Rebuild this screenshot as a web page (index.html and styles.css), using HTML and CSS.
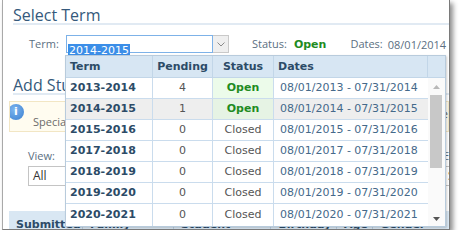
FILE: index.html
```html
<!DOCTYPE html>
<html lang="en">
<head>
  <meta charset="UTF-8" />
  <title>Select Term</title>
  <link rel="stylesheet" href="styles.css">
</head>
<body>
  <div class="window">
    <h2 class="section-title">Select Term</h2>

    <div class="term-row">
      <span class="label term-label">Term:</span>
      <div class="combo">
        <div class="combo-input"><span class="selected-text">2014-2015</span></div>
        <div class="combo-btn">
          <svg width="8" height="5" viewBox="0 0 8 5"><path d="M0.5 0.5 L4 4 L7.5 0.5" fill="none" stroke="#8a8a8a" stroke-width="1"/></svg>
        </div>
      </div>
      <span class="label status-label">Status:</span>
      <span class="open-text">Open</span>
      <span class="label dates-label">Dates:</span>
      <span class="dates-value">08/01/2014 - 07/31/2015</span>
    </div>

    <h2 class="section-title add-title">Add Students</h2>

    <div class="info-box">
      <span class="info-icon">i</span>
      <span class="info-text">Special education students must be approved before they are enrolled.</span>
      <span class="info-note">Note</span>
    </div>

    <div class="filters">
      <div class="filter view-filter">
        <span class="label">View:</span>
        <div class="select-box">All</div>
      </div>
      <div class="filter">
        <span class="label">Enrollment:</span>
        <div class="select-box">Show all</div>
      </div>
    </div>

    <div class="grid-head">
      <div class="gh-cell c-sub">Submitted</div>
      <div class="gh-cell c-fam">Family</div>
      <div class="gh-cell c-stu">Student</div>
      <div class="gh-cell c-bir">Birthday</div>
      <div class="gh-cell c-age">Age</div>
      <div class="gh-cell c-gen">Gender</div>
    </div>

    <!-- dropdown list of the Term combo -->
    <div class="term-popup">
      <div class="popup-head">
        <div class="ph-cell left">Term</div>
        <div class="ph-cell center">Pending</div>
        <div class="ph-cell center">Status</div>
        <div class="ph-cell left">Dates</div>
        <div class="ph-cell scroll-head"></div>
      </div>
      <div class="popup-body">
        <div class="rows">
          <div class="row">
            <div class="cell term">2013-2014</div>
            <div class="cell num">4</div>
            <div class="cell status is-open">Open</div>
            <div class="cell dates">08/01/2013 - 07/31/2014</div>
          </div>
          <div class="row current">
            <div class="cell term">2014-2015</div>
            <div class="cell num">1</div>
            <div class="cell status is-open">Open</div>
            <div class="cell dates">08/01/2014 - 07/31/2015</div>
          </div>
          <div class="row">
            <div class="cell term">2015-2016</div>
            <div class="cell num">0</div>
            <div class="cell status">Closed</div>
            <div class="cell dates">08/01/2015 - 07/31/2016</div>
          </div>
          <div class="row">
            <div class="cell term">2017-2018</div>
            <div class="cell num">0</div>
            <div class="cell status">Closed</div>
            <div class="cell dates">08/01/2017 - 07/31/2018</div>
          </div>
          <div class="row">
            <div class="cell term">2018-2019</div>
            <div class="cell num">0</div>
            <div class="cell status">Closed</div>
            <div class="cell dates">08/01/2018 - 07/31/2019</div>
          </div>
          <div class="row">
            <div class="cell term">2019-2020</div>
            <div class="cell num">0</div>
            <div class="cell status">Closed</div>
            <div class="cell dates">08/01/2019 - 07/31/2020</div>
          </div>
          <div class="row last">
            <div class="cell term">2020-2021</div>
            <div class="cell num">0</div>
            <div class="cell status">Closed</div>
            <div class="cell dates">08/01/2020 - 07/31/2021</div>
          </div>
        </div>
        <div class="scrollbar">
          <svg class="arrow up" width="7" height="4" viewBox="0 0 7 4"><path d="M0 4 L3.5 0 L7 4 Z" fill="#b8b8b8"/></svg>
          <div class="thumb"></div>
          <svg class="arrow down" width="7" height="4" viewBox="0 0 7 4"><path d="M0 0 L3.5 4 L7 0 Z" fill="#555"/></svg>
        </div>
      </div>
    </div>
  </div>
</body>
</html>
```

FILE: styles.css
```css
body {
  margin: 0;
  padding: 0;
  background: #fff;
  font-family: "Open Sans", sans-serif;
}

.window {
  position: relative;
  margin-left: 2px;
  width: 446px;
  height: 229px;
  background: #fff;
  border-left: 1px solid #a9a9a9;
  border-right: 1px solid #7a7a7a;
  border-bottom: 1px solid #7a7a7a;
  box-shadow: 3px 3px 5px rgba(0, 0, 0, 0.45);
  overflow: hidden;
}

.section-title {
  margin: 7px 0 0 10px;
  padding-left: 0;
  font-size: 16px;
  font-weight: 400;
  line-height: 16px;
  color: #35597b;
  border-bottom: 2px solid #e1eaf3;
}

.add-title {
  margin-top: 24px;
}

.label {
  font-family: "Open Sans", sans-serif;
  font-size: 11px;
  color: #5b6f82;
  line-height: 14px;
}

.term-row {
  display: flex;
  align-items: center;
  height: 18px;
  margin-top: 10px;
  padding-left: 26px;
  white-space: nowrap;
}

.term-row > * {
  flex: none;
}

.term-label {
  width: 37px;
}

.combo {
  display: flex;
  height: 18px;
}

.combo-input {
  box-sizing: border-box;
  width: 147px;
  height: 18px;
  border: 1px solid #7db2e8;
  padding: 1px 0 0 1px;
}

.selected-text {
  display: inline-block;
  height: 13px;
  line-height: 13px;
  padding: 0 1px;
  background: #3b8ee8;
  color: #fff;
  font-family: "DejaVu Sans", sans-serif;
  font-size: 11px;
}

.combo-btn {
  box-sizing: border-box;
  width: 16px;
  height: 18px;
  background: #efefef;
  border: 1px solid #c9c9c9;
  border-left: none;
  display: flex;
  align-items: center;
  justify-content: center;
}

.status-label {
  margin-left: 23px;
}

.open-text {
  margin-left: 7px;
  font-family: "DejaVu Sans", sans-serif;
  font-weight: bold;
  font-size: 11px;
  color: #1f8c1f;
}

.dates-label {
  margin-left: 24px;
}

.dates-value {
  margin-left: 5px;
  font-size: 11px;
  color: #5b6f82;
}

.info-box {
  display: flex;
  align-items: center;
  box-sizing: border-box;
  height: 31px;
  margin: 6px 0 0 6px;
  background: #fffcf0;
  border: 1px solid #f2e6c4;
  overflow: hidden;
  white-space: nowrap;
}

.info-icon {
  flex: none;
  width: 16px;
  height: 16px;
  margin: -10px 0 0 -2px;
  border-radius: 50%;
  background: radial-gradient(circle at 40% 35%, #7db5ef, #3a7fd0);
  color: #fff;
  font-family: "DejaVu Sans", sans-serif;
  font-weight: bold;
  font-size: 11px;
  line-height: 16px;
  text-align: center;
}

.info-text {
  width: 408px;
  margin: 10px 0 0 9px;
  font-size: 11px;
  color: #6b6b6b;
  overflow: hidden;
}

.info-note {
  margin-top: -6px;
  font-size: 11px;
  color: #555;
}

.filters {
  display: flex;
  margin-top: 17px;
  padding-left: 25px;
}

.filter {
  display: flex;
  flex-direction: column;
  gap: 3px;
}

.view-filter {
  width: 415px;
  flex: none;
}

.select-box {
  box-sizing: border-box;
  width: 120px;
  height: 20px;
  border: 1px solid #c4c4c4;
  padding: 0 4px;
  font-size: 12px;
  line-height: 18px;
  color: #333;
}

.grid-head {
  display: flex;
  height: 20px;
  margin: 25px 0 0 6px;
  background: #d9e7f3;
  white-space: nowrap;
}

.gh-cell {
  box-sizing: border-box;
  padding: 7px 0 0 7px;
  border-right: 1px solid #b9cde0;
  font-family: "DejaVu Sans", sans-serif;
  font-weight: bold;
  font-size: 11px;
  color: #2c4b67;
}

.c-sub { width: 78px; }
.c-fam { width: 96px; }
.c-stu { width: 103px; }
.c-bir { width: 69px; }
.c-age { width: 38px; }
.c-gen { width: 80px; border-right: none; }

/* Term dropdown */
.term-popup {
  position: absolute;
  left: 62px;
  top: 55px;
  width: 381px;
  box-sizing: border-box;
  background: #fff;
  border: 1px solid #b8cbdc;
  box-shadow: 1px 1px 2px rgba(0, 0, 0, 0.2);
  font-family: "DejaVu Sans", sans-serif;
  font-size: 11px;
}

.popup-head {
  display: grid;
  grid-template-columns: 87px 60px 61px 154px 17px;
  height: 22px;
  background: #d7e6f3;
}

.ph-cell {
  box-sizing: border-box;
  border-right: 1px solid #c2d6e8;
  border-bottom: 1px solid #c2d6e8;
  font-weight: bold;
  color: #2c4b67;
  line-height: 21px;
}

.ph-cell.left {
  padding-left: 4px;
}

.ph-cell.center {
  text-align: center;
}

.ph-cell.scroll-head {
  border-right: none;
}

.popup-body {
  display: flex;
  height: 148px;
}

.rows {
  width: 362px;
}

.row {
  display: grid;
  grid-template-columns: 87px 60px 61px 154px;
  height: 21px;
}

.row.last {
  height: 22px;
}

.row.current {
  background: #eeeeee;
}

.cell {
  box-sizing: border-box;
  border-right: 1px solid #cadced;
  border-bottom: 1px solid #cadced;
  line-height: 20px;
  white-space: nowrap;
}

.row.last .cell {
  border-bottom: none;
  line-height: 22px;
}

.cell.term {
  padding-left: 4px;
  font-weight: bold;
  color: #2c4b67;
}

.cell.num {
  text-align: center;
  color: #555;
}

.cell.status {
  text-align: center;
  color: #555;
}

.cell.status.is-open {
  background: #ecfbea;
  color: #1f8c1f;
  font-weight: bold;
}

.row.current .cell.status.is-open {
  background: #e6f3e4;
}

.cell.dates {
  padding-left: 6px;
  color: #45698a;
  border-right: none;
}

.scrollbar {
  position: relative;
  width: 17px;
  background: #fafafa;
}

.scrollbar .arrow {
  position: absolute;
  left: 5px;
}

.scrollbar .arrow.up {
  top: 7px;
}

.scrollbar .arrow.down {
  bottom: 5px;
}

.thumb {
  position: absolute;
  left: 2px;
  top: 17px;
  width: 12px;
  height: 73px;
  background: #c8c8c8;
}
```
